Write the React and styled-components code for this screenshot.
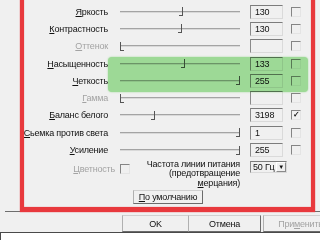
import styled, { createGlobalStyle } from "styled-components";

const Global = createGlobalStyle`
    html, body {
        margin: 0;
        padding: 0;
        background: #f0f0f0;
        overflow: hidden;
    }
    * { box-sizing: border-box; }
`

const Screen = styled.div`
    position: relative;
    width: 320px;
    height: 240px;
    overflow: hidden;
    display: flex;
    flex-direction: column;
    background: #f0f0f0;
    font-family: "Liberation Sans", Arial, sans-serif;
    font-size: 9px;
    letter-spacing: -0.2px;
    color: #111;
`
const Panel = styled.div`
    height: 212px;
    margin-left: 5px;
    border-bottom: 1px solid #6e6e6e;
    flex-shrink: 0;
`
const Grid = styled.div`
    display: grid;
    grid-template-columns: 103px 142px 41px 10px;
    grid-template-rows: 3px repeat(9, 17.3px);
    align-items: center;
`
const Header = styled.div`
    grid-column: 4;
    justify-self: center;
    align-self: end;
    line-height: 11px;
    margin-bottom: 5px;
    white-space: nowrap;
`
const Label = styled.div`
    text-align: right;
    white-space: nowrap;
    color: ${(p) => (p.disabled ? "#a3a3a3" : "#111")};
`
const Slider = styled.div`
    position: relative;
    height: 17px;
    margin: 0 10px 0 12px;
    display: flex;
    align-items: center;
`
const Track = styled.div`
    width: 100%;
    height: 2px;
    background: #a4a4a4;
    border-bottom: 1px solid #d9d9d9;
`
const Thumb = styled.span`
    position: absolute;
    top: 4px;
    width: 4px;
    height: 9px;
    border-bottom: 1px solid #555;
    ${(p) => (p.start ? "border-left: 1.5px solid #555;" : "border-right: 1.5px solid #555; transform: translateX(-100%);")}
`
const Edit = styled.div`
    width: 33px;
    height: 14px;
    padding-left: 4px;
    line-height: 12px;
    border: 1px solid #dadada;
    border-top-color: #7c7c7c;
    border-left-color: #8a8a8a;
    background: transparent;
`
const Check = styled.div`
    width: 10px;
    height: 10px;
    border: 1px solid #e4e4e4;
    border-top-color: #858585;
    border-left-color: #858585;
    font-size: 8px;
    line-height: 8px;
    text-align: center;
    font-weight: bold;
`
const Bottom = styled.div`
    display: flex;
    align-items: flex-start;
`
const ColorGroup = styled.div`
    width: 125px;
    display: flex;
    justify-content: flex-end;
    align-items: center;
    gap: 5px;
    margin-top: 5px;
    color: #a3a3a3;
`
const FreqLabel = styled.div`
    width: 110px;
    text-align: right;
    line-height: 9.6px;
    margin-top: 1px;
`
const Select = styled.div`
    margin-left: 10px;
    margin-top: 2px;
    width: 37px;
    height: 12px;
    display: flex;
    align-items: center;
    justify-content: space-between;
    padding-left: 2px;
    white-space: nowrap;
    border: 1px solid #dadada;
    border-top-color: #7c7c7c;
    border-left-color: #8a8a8a;
`
const DropButton = styled.div`
    width: 10px;
    height: 10px;
    display: flex;
    align-items: center;
    justify-content: center;
    border: 1px solid #8a8a8a;
    border-top-color: #fff;
    border-left-color: #fff;
    font-size: 6px;
    flex-shrink: 0;
`
const DefaultRow = styled.div`
    padding-left: 128px;
    margin-top: 2px;
`
const Button = styled.div`
    width: ${(p) => p.w || 70}px;
    height: ${(p) => p.h || 14}px;
    display: flex;
    align-items: center;
    justify-content: center;
    border: 1px solid #6b6b6b;
    border-top-color: #d0d0d0;
    border-left-color: #b0b0b0;
    background: #f0f0f0;
    white-space: nowrap;
    color: ${(p) => (p.disabled ? "#a3a3a3" : "#111")};
    flex-shrink: 0;
`
const ButtonBar = styled.div`
    height: 20px;
    display: flex;
    align-items: flex-end;
    padding-left: 122px;
    overflow: hidden;
    flex-shrink: 0;
    & > * + * { margin-left: -1px; }
    & > :last-child { margin-left: 2px; }
`
const StatusBox = styled.div`
    flex: 1;
    background: #fff;
    border-top: 1px solid #4a4a4a;
    border-left: 1px solid #4a4a4a;
`
const Highlight = styled.div`
    position: absolute;
    left: 108px;
    top: 57px;
    width: 200px;
    height: 35px;
    border-radius: 4px;
    background: #a7e7a0;
    box-shadow: 0 0 2px #a7e7a0;
    mix-blend-mode: multiply;
    pointer-events: none;
`
const RedFrame = styled.div`
    position: absolute;
    left: 20px;
    top: -10px;
    width: 295px;
    height: 222px;
    border: 4px solid #e8393d;
    border-bottom-width: 5px;
    box-shadow: 0 0 1px #e8393d, inset 0 0 1px #e8393d;
    pointer-events: none;
`

const rows = [
    { label: "Яркость", value: "130", pos: 0.525 },
    { label: "Контрастность", value: "130", pos: 0.517 },
    { label: "Оттенок", value: "", pos: 0, disabled: true },
    { label: "Насыщенность", value: "133", pos: 0.54 },
    { label: "Четкость", value: "255", pos: 1 },
    { label: "Гамма", value: "", pos: 0, disabled: true },
    { label: "Баланс белого", value: "3198", pos: 0.29, checked: true },
    { label: "Сьемка против света", value: "1", pos: 1 },
    { label: "Усиление", value: "255", pos: 1 },
]

const Acc = ({ text }) => (
    <>
        <u>{text[0]}</u>
        {text.slice(1)}
    </>
)

export default function App() {
    return (
        <>
            <Global />
            <Screen>
                <Panel>
                    <Grid>
                        <Header>Авто</Header>
                        {rows.map((r) => [
                            <Label key={r.label + "l"} disabled={r.disabled}>
                                <Acc text={r.label} />
                            </Label>,
                            <Slider key={r.label + "s"}>
                                <Track />
                                <Thumb start={r.pos === 0} style={{ left: `${r.pos * 100}%` }} />
                            </Slider>,
                            <Edit key={r.label + "e"}>{r.value}</Edit>,
                            <Check key={r.label + "c"}>{r.checked ? "✓" : ""}</Check>,
                        ])}
                    </Grid>
                    <Bottom>
                        <ColorGroup>
                            <span><Acc text="Цветность" /></span>
                            <Check />
                        </ColorGroup>
                        <FreqLabel>
                            Частота линии питания
                            <br />
                            (предотвращение
                            <br />
                            <Acc text="мерцания)" />
                        </FreqLabel>
                        <Select>
                            <span>50 Гц</span>
                            <DropButton>▼</DropButton>
                        </Select>
                    </Bottom>
                    <DefaultRow>
                        <Button w={70}>
                            <Acc text="По умолчанию" />
                        </Button>
                    </DefaultRow>
                </Panel>
                <ButtonBar>
                    <Button w={67} h={17}>OK</Button>
                    <Button w={73} h={17}>Отмена</Button>
                    <Button w={75} h={17} disabled>
                        При<u>м</u>енить
                    </Button>
                </ButtonBar>
                <StatusBox />
                <Highlight />
                <RedFrame />
            </Screen>
        </>
    )
}
